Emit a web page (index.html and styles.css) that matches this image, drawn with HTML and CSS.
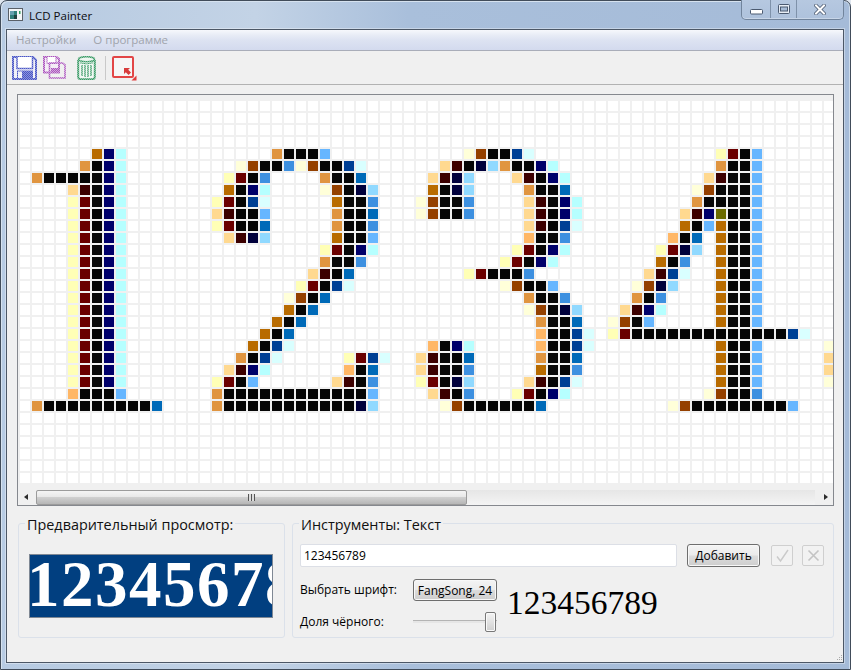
FILE: index.html
```html
<!DOCTYPE html>
<html lang="ru">
<head>
<meta charset="utf-8">
<title>LCD Painter</title>
<link rel="stylesheet" href="styles.css">
</head>
<body>
<div class="window">
  <header class="titlebar">
    <svg class="app-icon" width="15" height="13" viewBox="0 0 15 13">
      <rect x="0.5" y="0.5" width="14" height="12" fill="#f4f6f8" stroke="#5a6068"/>
      <rect x="2" y="3" width="7" height="8" fill="#2f7f7a"/>
      <rect x="2" y="3" width="4" height="4" fill="#66a0b0"/>
      <rect x="6" y="7" width="3" height="4" fill="#20403f"/>
      <rect x="11" y="3" width="1.5" height="3" fill="#30a060"/>
    </svg>
    <span class="title">LCD Painter</span>
    <div class="controls">
      <div class="ctl ctl-min">
        <svg width="13" height="6" viewBox="0 0 13 6"><rect x="0.5" y="0.5" width="12" height="4.5" rx="1" fill="#fff" stroke="#4b5a70"/></svg>
      </div>
      <div class="ctl ctl-max">
        <svg width="12" height="10" viewBox="0 0 12 10"><rect x="0.5" y="0.5" width="11" height="9" rx="1" fill="#e8eef6" stroke="#4b5a70"/><rect x="2.5" y="3" width="7" height="4" fill="#a8bcd6" stroke="#4b5a70"/></svg>
      </div>
      <div class="ctl ctl-close">
        <svg width="12" height="11" viewBox="0 0 12 11"><path d="M2 1.5 L10 9.5 M10 1.5 L2 9.5" stroke="#4b5a70" stroke-width="3.6" stroke-linecap="square"/><path d="M2 1.5 L10 9.5 M10 1.5 L2 9.5" stroke="#fff" stroke-width="2" stroke-linecap="square"/></svg>
      </div>
    </div>
  </header>

  <div class="client">
    <nav class="menubar">
      <span class="menu-item">Настройки</span>
      <span class="menu-item">О программе</span>
    </nav>

    <div class="toolbar">
      <svg class="tool tool-save" width="25" height="24" viewBox="0 0 25 24">
        <defs>
          <pattern id="dither-blue" width="2" height="2" patternUnits="userSpaceOnUse">
            <rect width="2" height="2" fill="#8c94dc"/>
            <rect width="1" height="1" fill="#4a56c4"/>
            <rect x="1" y="1" width="1" height="1" fill="#4a56c4"/>
          </pattern>
        </defs>
        <path d="M1 1 H21 L24 4 V23 H1 Z" fill="#f1f1f8" stroke="url(#dither-blue)" stroke-width="2"/>
        <path d="M5 1 V12.5 H20.5 V1" fill="#fff" stroke="url(#dither-blue)" stroke-width="1.5"/>
        <rect x="5.5" y="15" width="15" height="7.5" fill="#f1f1f8" stroke="url(#dither-blue)"/>
        <rect x="10" y="15" width="10.5" height="8" fill="url(#dither-blue)"/>
      </svg>
      <svg class="tool tool-saveas" width="23" height="23" viewBox="0 0 23 23">
        <defs>
          <pattern id="dither-purple" width="2" height="2" patternUnits="userSpaceOnUse">
            <rect width="2" height="2" fill="#d4a4de"/>
            <rect width="1" height="1" fill="#aa58bc"/>
            <rect x="1" y="1" width="1" height="1" fill="#aa58bc"/>
          </pattern>
        </defs>
        <path d="M1 1 H13.5 L16 3 V16.5 H1 Z" fill="#f4edf6" stroke="url(#dither-purple)" stroke-width="2"/>
        <path d="M4 1 V7.5 H13 V1" fill="#fff" stroke="url(#dither-purple)"/>
        <path d="M6.5 7 H19.5 L22 9 V22 H6.5 Z" fill="none" stroke="url(#dither-purple)" stroke-width="1.6"/>
        <rect x="8" y="12" width="8" height="5" fill="url(#dither-purple)"/>
      </svg>
      <svg class="tool tool-trash" width="19" height="24" viewBox="0 0 19 24">
        <defs>
          <pattern id="dither-green" width="2" height="2" patternUnits="userSpaceOnUse">
            <rect width="2" height="2" fill="#86c4a0"/>
            <rect width="1" height="1" fill="#3c9868"/>
            <rect x="1" y="1" width="1" height="1" fill="#3c9868"/>
          </pattern>
        </defs>
        <path d="M1.2 4 V21 Q1.2 23.2 4 23.2 H15 Q17.8 23.2 17.8 21 V4" fill="#f2f8f4" stroke="url(#dither-green)" stroke-width="2"/>
        <ellipse cx="9.5" cy="3.2" rx="8" ry="2.5" fill="#eff7f2" stroke="url(#dither-green)" stroke-width="1.6"/>
        <path d="M5 9 V20 M8 9 V21 M11 9 V21 M14 9 V20" stroke="url(#dither-green)" stroke-width="1.4"/>
        <path d="M3 6.8 Q9.5 9 16 6.8" fill="none" stroke="url(#dither-green)"/>
      </svg>
      <span class="tool-sep"></span>
      <svg class="tool tool-resize" width="25" height="25" viewBox="0 0 25 25">
        <rect x="1" y="1" width="20" height="20" rx="1" fill="#f6f6f6" stroke="#e24646" stroke-width="2"/>
        <path d="M12 12 H18 L16.2 13.8 L19 16.6 L16.6 19 L13.8 16.2 L12 18 Z" fill="#d83c3c"/>
        <path d="M24.5 19.5 V24.5 H19.5 Z" fill="#e03c3c"/>
      </svg>
    </div>

    <main class="main">
      <section class="canvas-frame">
        <div class="canvas-view">
          <div class="pixels" id="pixels"></div>
        </div>
        <div class="hscroll">
          <span class="arrow arrow-left"></span>
          <div class="thumb"><span class="grip-lines"></span></div>
          <span class="track"></span>
          <span class="arrow arrow-right"></span>
        </div>
      </section>

      <div class="panels">
        <section class="group group-preview">
          <h2 class="legend">Предварительный просмотр:</h2>
          <div class="preview">12345678</div>
        </section>

        <section class="group group-tools">
          <h2 class="legend">Инструменты: Текст</h2>
          <div class="text-row">
            <div class="text-input">123456789</div>
            <button class="btn btn-add" type="button">Добавить</button>
            <button class="btn-icon btn-ok" type="button" disabled>
              <svg width="15" height="15" viewBox="0 0 15 15"><path d="M2 8.5 L5.5 13 L13 2" fill="none" stroke="#cacaca" stroke-width="1.4"/></svg>
            </button>
            <button class="btn-icon btn-cancel" type="button" disabled>
              <svg width="15" height="15" viewBox="0 0 15 15"><path d="M2.5 2.5 L12.5 12.5 M12.5 2.5 L2.5 12.5" fill="none" stroke="#c4c4c4" stroke-width="1.6"/></svg>
            </button>
          </div>
          <div class="font-grid">
            <span class="label">Выбрать шрифт:</span>
            <button class="btn btn-font" type="button">FangSong, 24</button>
            <div class="font-sample">123456789</div>
            <span class="label">Доля чёрного:</span>
            <div class="slider"><span class="slider-handle"></span></div>
          </div>
        </section>
      </div>
    </main>
    <svg class="size-grip" width="8" height="8" viewBox="0 0 8 8">
      <path d="M6 1h1v1H6zM4 3h1v1H4zM6 3h1v1H6zM2 5h1v1H2zM4 5h1v1H4zM6 5h1v1H6z" fill="#a8a8a8"/>
    </svg>
  </div>
</div>
<script src="app.js"></script>
</body>
</html>
```

FILE: styles.css
```css
* { box-sizing: border-box; }

html, body {
  margin: 0;
  padding: 0;
  background: #dfe6ef;
}

.window {
  width: 851px;
  height: 670px;
  display: flex;
  flex-direction: column;
  border: 1px solid #414c5a;
  border-radius: 7px 7px 0 0;
  background: linear-gradient(90deg, #b7cbe3 0, #b9cce2 8%, #c3d3e6 30%, #a9bfdb 48%, #a5bbd8 100%);
  box-shadow: inset 1px 1px 0 #d6e2ef, inset -1px 0 0 #cddbeb;
  font-family: "Open Sans", "Noto Sans", sans-serif;
  font-size: 12px;
  color: #000;
}

.titlebar {
  height: 28px;
  flex: none;
  display: flex;
  align-items: flex-start;
  padding: 7px 7px 0 7px;
  position: relative;
}

.app-icon { flex: none; }

.title {
  margin-left: 6px;
  font-size: 11.5px;
  line-height: 15px;
  color: #0c0c10;
}

.controls {
  position: absolute;
  top: -1px;
  right: 6px;
  display: flex;
  height: 20px;
  border: 1px solid #71849c;
  border-top: none;
  border-radius: 0 0 5px 5px;
  background: linear-gradient(180deg, #b6c8e0, #aec2dc);
  box-shadow: inset 0 -1px 0 #c8d6e8;
}

.ctl {
  display: flex;
  align-items: center;
  justify-content: center;
  height: 18px;
}
.ctl-min { width: 28px; padding-top: 5px; }
.ctl-max { width: 27px; border-left: 1px solid #7f92aa; border-right: 1px solid #7f92aa; padding-bottom: 1px; }
.ctl-close { width: 46px; }

.client {
  flex: 1;
  margin: 0 6px 6px 5px;
  border: 1px solid #4c5766;
  display: flex;
  flex-direction: column;
  background: #f0f0f0;
  position: relative;
  box-shadow: 0 0 0 1px rgba(255, 255, 255, .35);
}

.menubar {
  height: 21px;
  flex: none;
  display: flex;
  align-items: center;
  gap: 17px;
  padding: 0 0 1px 9px;
  border-bottom: 1px solid #a9adb9;
  background: linear-gradient(180deg, #f6f8fc 0, #e8ecf6 25%, #dde3f2 50%, #d3daee 100%);
}

.menu-item {
  color: #a0a4ac;
  font-size: 11.5px;
  line-height: 16px;
}

.toolbar {
  height: 34px;
  flex: none;
  display: flex;
  align-items: flex-start;
  padding: 5px 0 0 5px;
  border-bottom: 1px solid #b2b2b2;
  background: #f0f0f0;
}

.tool { flex: none; display: block; }
.tool-saveas { margin-left: 6px; }
.tool-trash { margin-left: 11px; }
.tool-resize { margin-left: 6px; }

.tool-sep {
  width: 1px;
  height: 24px;
  margin-left: 9px;
  background: #c9c9c9;
}

.main {
  flex: 1;
  padding: 9px 9px 0 10px;
  display: flex;
  flex-direction: column;
}

.canvas-frame {
  height: 412px;
  flex: none;
  border: 1px solid #85888e;
  display: flex;
  flex-direction: column;
  background: #f0f0f0;
}

.canvas-view {
  height: 395px;
  flex: none;
  overflow: hidden;
  padding: 6px 0 0 2px;
  background: #f0f0f0;
}

.pixels {
  display: grid;
  grid-template-columns: repeat(68, 10px);
  grid-auto-rows: 10px;
  gap: 2px;
}

.px { background: #fff; }
.px-a { background: #b86b00; }
.px-k { background: #060606; }
.px-n { background: #00006a; }
.px-c { background: #b6ffff; }
.px-d { background: #e09540; }
.px-m { background: #6a0000; }
.px-D { background: #3c0000; }
.px-y { background: #ffffb6; }
.px-p { background: #ffd990; }
.px-q { background: #ffb766; }
.px-b { background: #003f94; }
.px-B { background: #006ab8; }
.px-L { background: #3d90e0; }
.px-s { background: #66b6ff; }
.px-S { background: #90d9ff; }
.px-w { background: #d9ffff; }
.px-v { background: #ffffd9; }
.px-r { background: #944000; }
.px-N { background: #00003c; }
.px-o { background: #6a6a00; }

.hscroll {
  height: 15px;
  flex: none;
  display: flex;
  background: linear-gradient(180deg, #e6e6e6, #f4f4f4);
}

.arrow {
  width: 18px;
  flex: none;
  position: relative;
  background: #f0f0f0;
}
.arrow::after {
  content: "";
  position: absolute;
  top: 4px;
  width: 0;
  height: 0;
  border-top: 3.5px solid transparent;
  border-bottom: 3.5px solid transparent;
}
.arrow-left::after { left: 6px; border-right: 4px solid #2c2c2c; }
.arrow-right::after { right: 5px; border-left: 4px solid #2c2c2c; }

.thumb {
  width: 431px;
  flex: none;
  border: 1px solid #9b9b9b;
  border-radius: 2px;
  background: linear-gradient(180deg, #f4f4f4 0, #e8e8e8 45%, #cfcfcf 50%, #b6b6b6 100%);
  display: flex;
  align-items: center;
  justify-content: center;
}

.grip-lines {
  width: 7px;
  height: 7px;
  background: repeating-linear-gradient(90deg, #555 0 1px, #ddd 1px 3px);
}

.track { flex: 1; }

.panels {
  margin-top: 17px;
  padding-left: 1px;
  display: flex;
  gap: 7px;
  height: 115px;
  flex: none;
}

.group {
  position: relative;
  border: 1px solid #dbe1ea;
  border-radius: 3px;
  height: 115px;
}

.legend {
  position: absolute;
  top: -9px;
  left: 6px;
  margin: 0;
  padding: 0 2px;
  background: #f0f0f0;
  font-size: 14.4px;
  line-height: 19px;
  font-weight: 400;
  color: #111;
}

.group-preview {
  width: 267px;
  flex: none;
  padding: 30px 0 0 10px;
}

.preview {
  width: 244px;
  height: 64px;
  border: 1px solid #7f8894;
  background: #013f80;
  color: #fff;
  font-family: "Liberation Serif", serif;
  font-weight: 700;
  font-size: 65px;
  letter-spacing: 1.5px;
  text-indent: -3px;
  line-height: 59px;
  white-space: nowrap;
  overflow: hidden;
}

.group-tools {
  flex: 1;
  padding: 20px 0 0 7px;
}

.text-row {
  display: flex;
  align-items: flex-start;
}

.text-input {
  width: 377px;
  height: 23px;
  border: 1px solid #dcdfe6;
  border-radius: 2px;
  background: #fff;
  padding-left: 3px;
  font-size: 12px;
  line-height: 21px;
}

.btn {
  font-family: inherit;
  font-size: 12px;
  color: #000;
  border: 1px solid #6e6e6e;
  border-radius: 3px;
  background: linear-gradient(180deg, #f4f4f4 0, #ebebeb 48%, #dcdcdc 52%, #cdcdcd 100%);
  box-shadow: inset 0 0 0 1px #f8f8f8;
  padding: 0;
}

.btn-add {
  width: 73px;
  height: 23px;
  margin-left: 10px;
}

.btn-icon {
  width: 22px;
  height: 21px;
  padding: 0;
  border: 1px solid #cfcfcf;
  border-radius: 2px;
  background: #f2f2f2;
  display: flex;
  align-items: center;
  justify-content: center;
}
.btn-ok { margin: 1px 0 0 11px; }
.btn-cancel { margin: 1px 0 0 9px; }

.font-grid {
  display: grid;
  grid-template-columns: 113px 84px auto;
  grid-template-rows: 22px 21px;
  row-gap: 10px;
  margin-top: 12px;
  align-items: center;
}

.label {
  font-size: 12px;
  line-height: 16px;
}

.btn-font {
  height: 22px;
  width: 84px;
  white-space: nowrap;
  overflow: hidden;
}

.font-sample {
  grid-column: 3;
  grid-row: 1 / span 2;
  margin-left: 10px;
  font-family: "Liberation Serif", serif;
  font-size: 33.5px;
  line-height: 38px;
  color: #000;
  align-self: start;
  margin-top: 5px;
}

.label:nth-of-type(2) { grid-column: 1; grid-row: 2; }
.slider { grid-column: 2; grid-row: 2; }

.slider {
  height: 21px;
  display: flex;
  justify-content: flex-end;
  align-items: center;
  padding-right: 1px;
  background: linear-gradient(180deg, transparent 0 9px, #b4b4b4 9px 10px, #e6e6e6 10px 12px, transparent 12px);
}

.slider-handle {
  width: 11px;
  height: 20px;
  border: 1px solid #787878;
  border-radius: 2px;
  background: linear-gradient(180deg, #f4f4f4, #d0d0d0);
  box-shadow: inset 0 0 0 1px #fafafa;
}

.size-grip {
  position: absolute;
  right: 0;
  bottom: 0;
}
```

FILE: app.js
```js
var K = function (n) { return new Array(n + 1).join("k"); };
var stem = [58, "akks"];
var one = [4, "ymknc"];

var ROWS = {
  4: [[6, "anc"], [21, "dkkks"], [37, "vrkkbw"], [58, "ymks"]],
  5: [[5, "dknc"], [18, "vrkkLvrkkbw"], [35, "pDkNSdkknc"], [58, "dkks"]],
  6: [[1, "dkkkkknc"], [17, "ymkL"], [25, "dkkB"], [34, "pDNS"], [41, "pDknc"], [57, "pDkks"]],
  7: [[4, "pDknc"], [17, "aknc"], [25, "vrkNS"], [34, "akNS"], [42, "dkkB"], [56, "vrkkks"]],
  8: [one, [16, "ymkbw"], [26, "akkL"], [33, "vrkkL"], [42, "pDknc"], [56, "dkkkks"]],
  9: [one, [16, "pDkks"], [26, "dkkB"], [33, "vrkkL"], [42, "pDknc"], [55, "pDnokks"]],
  10: [one, [16, "ymkkB"], [26, "dkkL"], [42, "pDkbw"], [55, "aksakks"]],
  11: [one, [17, "pDNS"], [26, "akks"], [42, "qkkL"], [54, "qkB"], stem],
  12: [one, [25, "ymknc"], [41, "ymknc"], [53, "ymNS"], stem],
  13: [one, [25, "dkkL"], [40, "ymknc"], [53, "akL"], stem],
  14: [one, [24, "pDkB"], [37, "ymkkkL"], [52, "pDbw"], stem],
  15: [one, [23, "ymkbw"], [40, "vrkks"], [51, "vrNS"], stem],
  16: [one, [22, "vrkB"], [42, "dkkL"], [51, "dkL"], stem],
  17: [one, [22, "akB"], [42, "vrkNS"], [50, "pDnc"], stem],
  18: [one, [21, "akB"], [43, "dkkB"], [49, "vrks"], stem],
  19: [one, [20, "akB"], [43, "qkkbw"], [49, "ym" + K(13) + "bw"]],
  20: [one, [19, "akbw"], [34, "qknc"], [43, "qkkbw"], stem, [67, "v"]],
  21: [one, [18, "dkbw"], [27, "ymbw"], [33, "pDkkB"], [43, "dkkB"], stem, [67, "p"]],
  22: [one, [17, "pDnc"], [27, "qkB"], [33, "pDkkL"], [43, "akkL"], stem, [67, "p"]],
  23: [one, [16, "ymks"], [26, "pDkL"], [33, "ymkNS"], [42, "pDkbw"], stem, [67, "v"]],
  24: [[4, "qkkks"], [16, "d" + K(12) + "s"], [34, "pDkL"], [41, "ymknc"], [57, "vrkkL"]],
  25: [[1, "d" + K(9) + "B"], [16, "d" + K(11) + "NS"], [35, "vr" + K(6) + "B"], [54, "vr" + K(8) + "s"]]
};

var COLS = 68;
var ROW_COUNT = 32;
var host = document.getElementById("pixels");

for (var r = 0; r < ROW_COUNT; r++) {
  var line = new Array(COLS);
  (ROWS[r] || []).forEach(function (seg) {
    for (var i = 0; i < seg[1].length; i++) line[seg[0] + i] = seg[1].charAt(i);
  });
  for (var c = 0; c < COLS; c++) {
    var cell = document.createElement("div");
    cell.className = line[c] ? "px px-" + line[c] : "px";
    host.appendChild(cell);
  }
}
```
